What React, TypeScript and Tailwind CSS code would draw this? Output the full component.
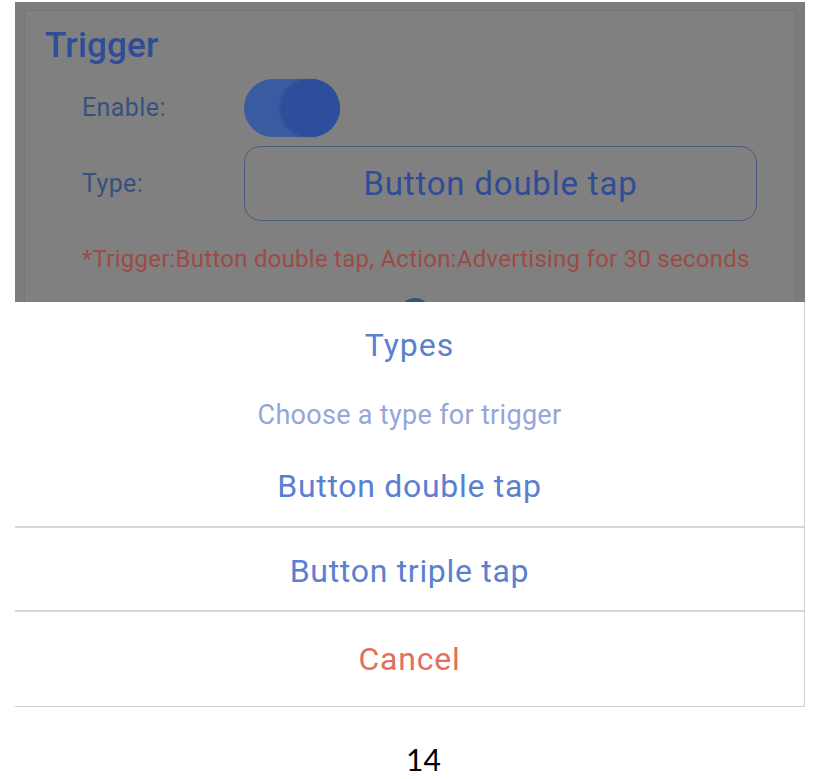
import React from "react";

export default function App() {
  return (
    <div className="w-[817px] h-[779px] bg-white relative overflow-hidden" style={{ fontFamily: "Roboto, 'Noto Sans', sans-serif" }}>
      <div className="ml-[15px] w-[790px] h-[300px] mt-[2px] bg-[#7c7c7c] pt-[8px] px-[9px] overflow-hidden">
        <div className="h-full bg-[#808080] rounded-t-[3px] border-t border-l border-r border-[#767676] pl-[20px] pt-[16px] relative">
          <div className="text-[35px] leading-[38px] font-medium text-[#2f4d96] tracking-[0.2px]">Trigger</div>
          <div className="flex items-center mt-[14px]">
            <div className="w-[199px] pl-[37px] text-[25px] text-[#38507f] tracking-[0.4px]">Enable:</div>
            <div className="w-[96px] h-[58px] rounded-full bg-[#3a5aa2] flex justify-end">
              <div className="w-[58px] h-[58px] rounded-full bg-[#2d4e9c] shadow-[-2px_0_3px_rgba(0,0,0,0.15)]"></div>
            </div>
          </div>
          <div className="flex items-center mt-[9px]">
            <div className="w-[199px] pl-[37px] text-[25px] text-[#38507f] tracking-[0.4px]">Type:</div>
            <div className="w-[513px] h-[75px] rounded-[16px] border border-[#4c5b7c] flex items-center justify-center text-[33px] text-[#2f4d96] tracking-[0.8px]">Button double tap</div>
          </div>
          <div className="pl-[37px] mt-[24px] text-[24px] leading-[28px] text-[#9c4b46] tracking-[0.25px] whitespace-nowrap">*Trigger:Button double tap, Action:Advertising for 30 seconds</div>
          <div className="absolute left-[374px] top-[287px] w-[32px] h-[32px] rounded-full bg-[#3a4f86]"></div>
        </div>
      </div>
      <div className="ml-[15px] w-[790px] bg-white border-r border-b border-[#cfcfcf] flex flex-col">
        <div className="h-[224px] flex flex-col items-center">
          <div className="mt-[24px] text-[32px] leading-[38px] text-[#5b80d0] tracking-[1px]">Types</div>
          <div className="mt-[35px] text-[27px] leading-[32px] text-[#95a6d8] tracking-[0.3px]">Choose a type for trigger</div>
          <div className="mt-[36px] text-[32px] leading-[38px] text-[#5b80d0] tracking-[0.7px]">Button double tap</div>
        </div>
        <div className="h-[84px] border-t-2 border-[#d6d6d6] flex items-center justify-center text-[32px] text-[#5b80d0] pt-[4px] tracking-[0.7px]">Button triple tap</div>
        <div className="h-[96px] border-t-2 border-[#d6d6d6] flex items-center justify-center text-[32px] text-[#e2705c] tracking-[0.8px]">Cancel</div>
      </div>
      <div className="mt-[34px] text-center pl-[30px] text-[30px] leading-[36px] text-black" style={{ fontFamily: "Lato, 'Open Sans', sans-serif" }}>14</div>
    </div>
  );
}
